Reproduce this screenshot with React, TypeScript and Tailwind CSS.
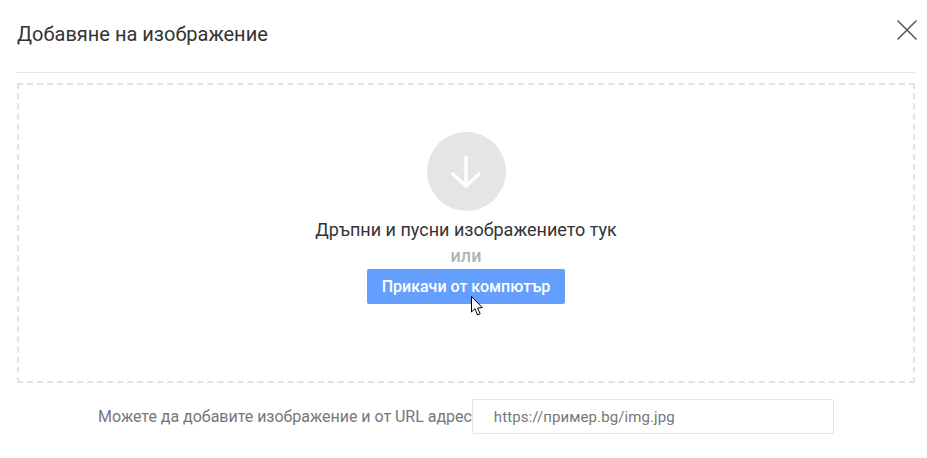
import React from 'react';

const Cursor = () => (
  <svg className="absolute left-[471px] top-[296px]" width="14" height="22" viewBox="0 0 14 22">
    <path d="M0.5 0.5 L0.5 16 L4 12.8 L6.6 19 L9.2 17.8 L6.6 12 L11.3 11.6 Z" fill="#fff" stroke="#000" strokeWidth="1" />
  </svg>
);

const App: React.FC = () => {
  return (
    <div className="relative w-[927px] h-[458px] bg-white font-['Roboto',sans-serif] overflow-hidden">
      <div className="flex flex-col pl-[17px] pr-[12px]">
        {/* Header */}
        <div className="relative flex items-center h-[73px] border-b border-[#e5e5e5] pb-[5px]">
          <h1 className="text-[20px] text-[#333333] font-normal">Добавяне на изображение</h1>
          <button className="absolute right-[-2px] top-[20px] text-[#555555]">
            <svg width="20" height="20" viewBox="0 0 20 20" className="block">
              <path d="M0.5 0.5 L19.5 19.5 M19.5 0.5 L0.5 19.5" stroke="currentColor" strokeWidth="1.5" fill="none" />
            </svg>
          </button>
        </div>

        {/* Drop zone */}
        <div className="mt-[10px] h-[300px] border-2 border-dashed border-[#e3e3e3] flex flex-col items-center pt-[47px]">
          <div className="w-[79px] h-[79px] rounded-full bg-[#e5e5e5] flex items-center justify-center">
            <svg width="32" height="36" viewBox="0 0 32 36" fill="none" stroke="#ffffff" strokeWidth="3.5" strokeLinecap="round" strokeLinejoin="round">
              <path d="M16 3 V32 M3 20 L16 32 L29 20" />
            </svg>
          </div>
          <p className="mt-[8px] text-[18px] leading-[22px] text-[#333333]">Дръпни и пусни изображението тук</p>
          <p className="mt-[5px] text-[18px] leading-[20px] font-medium text-[#b3b3b3]">или</p>
          <button className="mt-[3px] w-[198px] h-[35px] rounded-[2px] bg-[#659ffd] text-white text-[16px] font-medium">
            Прикачи от компютър
          </button>
        </div>

        {/* URL row */}
        <div className="mt-[16px] flex items-center pl-[81px]">
          <span className="text-[16px] text-[#777777] whitespace-nowrap tracking-[-0.02px]">Можете да добавите изображение и от URL адрес</span>
          <input
            readOnly
            value="https://пример.bg/img.jpg"
            className="w-[362px] h-[35px] border border-[#e5e5e5] rounded-[2px] pl-[21px] text-[15px] tracking-[0.1px] text-[#777777] outline-none"
          />
        </div>
      </div>
      <Cursor />
    </div>
  );
};

export default App;
